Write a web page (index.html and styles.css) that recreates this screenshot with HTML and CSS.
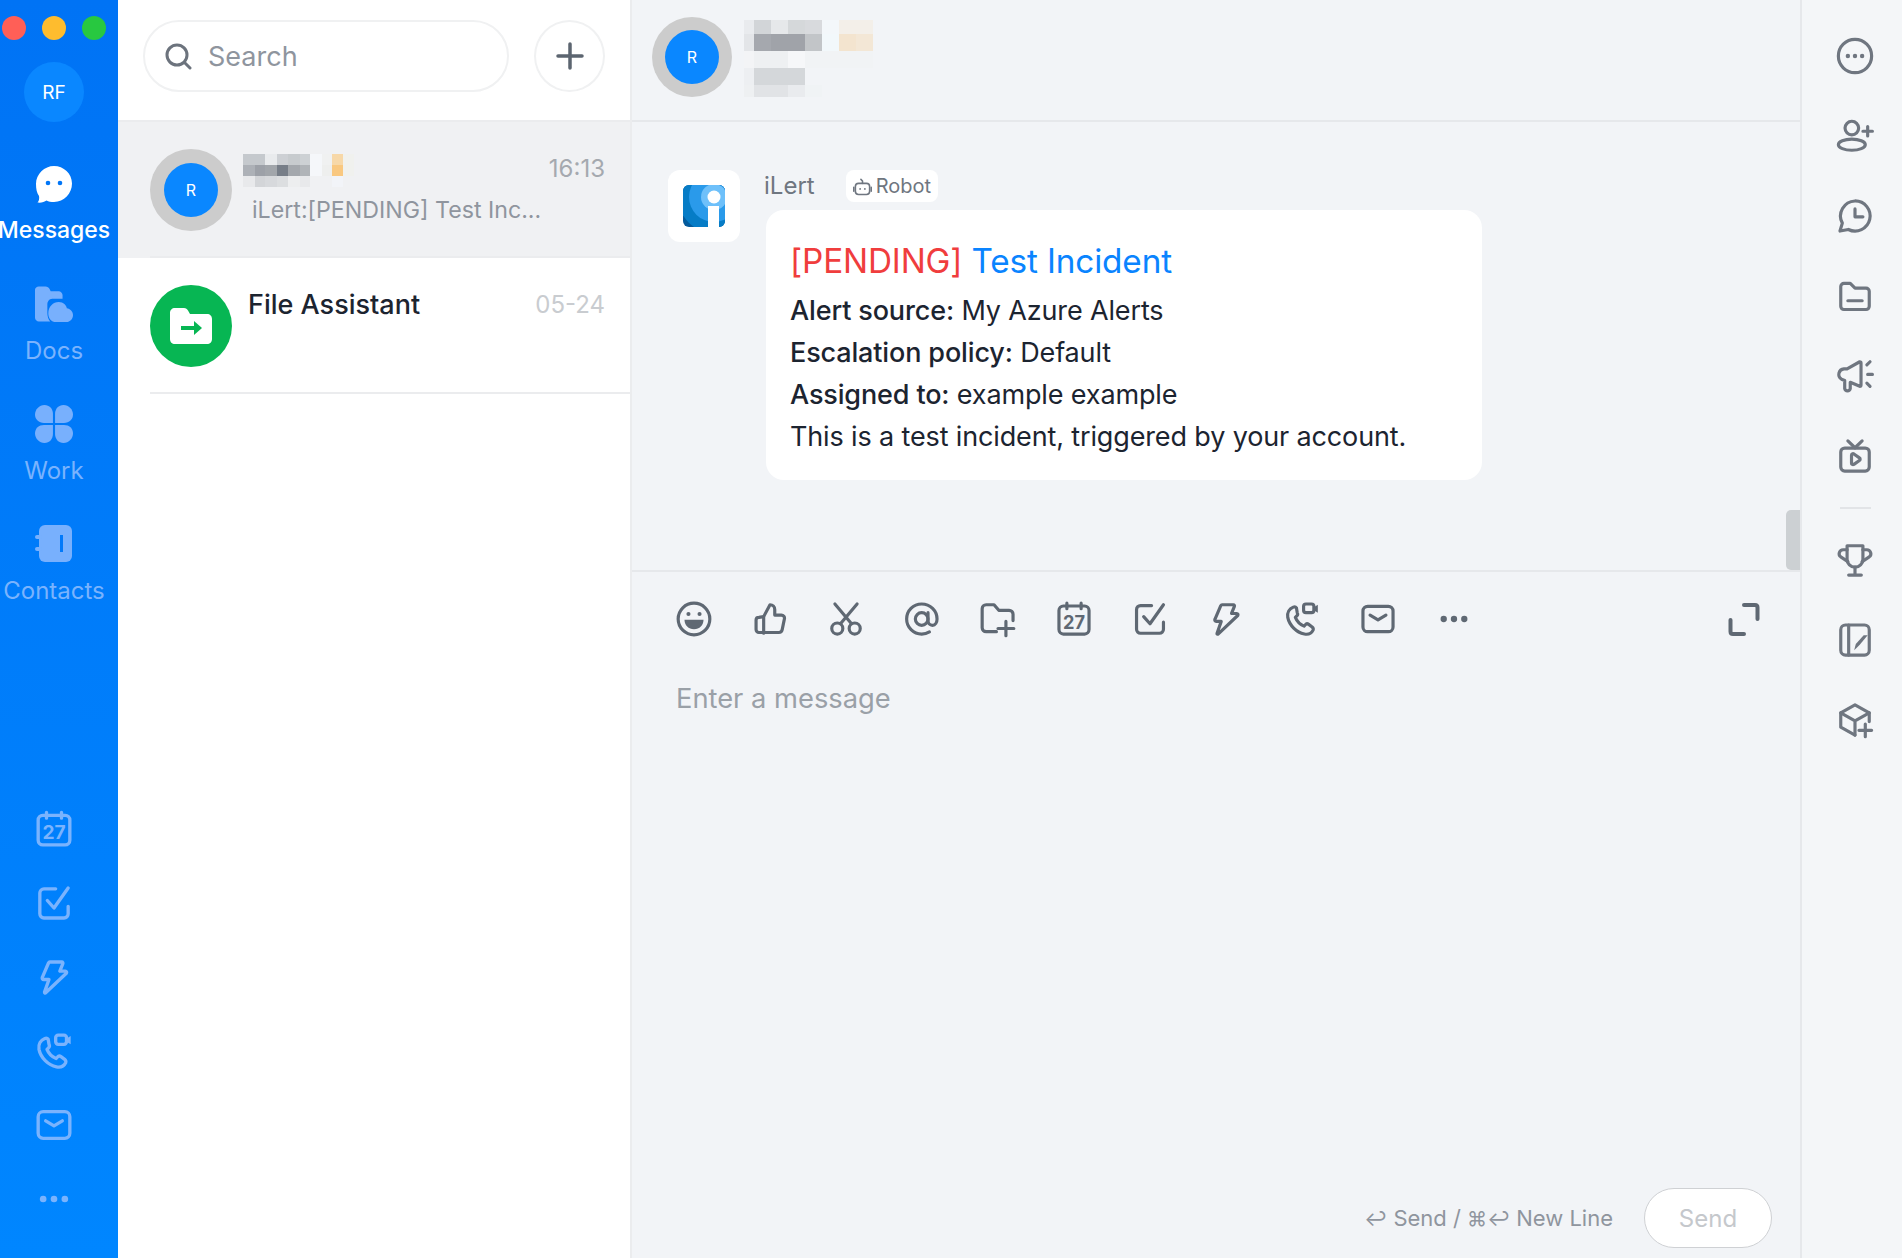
FILE: index.html
```html
<!DOCTYPE html>
<html lang="en">
<head>
  <meta charset="UTF-8">
  <title>Messages</title>
  <link rel="stylesheet" href="styles.css">
</head>
<body>
  <!-- shared icons -->
  <svg class="defs" aria-hidden="true">
    <symbol id="i-cal" viewBox="0 0 24 24">
      <rect x="2.5" y="3.8" width="19" height="17.7" rx="2.8"/>
      <path d="M7.5 2v3.5M16.5 2v3.500"/>
      <text x="12" y="18" class="cal-num">27</text>
    </symbol>
    <symbol id="i-check" viewBox="0 0 24 24">
      <path d="M20.500 14v4.500a2.500 2.500 0 0 1-2.500 2.500H6a2.500 2.500 0 0 1-2.500-2.500V6A2.500 2.500 0 0 1 6 3.500h7"/>
      <path d="M8 10.500l4 4.500 8.500-12"/>
    </symbol>
    <symbol id="i-bolt" viewBox="0 0 24 24">
      <path d="M9.500 3h7.200c.5 0 .8.500.6 1L15.500 8.500h3.300c.7 0 1 .7.600 1.300L7 21.500c-.3.300-.8 0-.7-.4L9 13.500H5.800c-.7 0-1.100-.7-.8-1.300L8.700 3.600c.2-.4.500-.6.800-.6z"/>
    </symbol>
    <symbol id="i-phone" viewBox="0 0 24 24">
      <path d="M6.500 4.500C4 5.500 2.500 8 3 11c1 5 5.500 9.500 10.500 10.500 2.500.5 4.500-.5 5.500-2.500.3-.8 0-1.500-.6-2l-2.200-1.600c-.7-.5-1.600-.4-2.100.2l-.8.9c-2.500-1-4.500-3-5.500-5.500l.9-.9c.6-.6.700-1.400.3-2.100L8.500 5c-.5-.7-1.200-.8-2-.5z"/>
      <rect x="13" y="2.500" width="6.500" height="5.500" rx="1.500"/>
      <path d="M22 3v5l-2.500-1.500v-2z" class="solid"/>
    </symbol>
    <symbol id="i-mail" viewBox="0 0 24 24">
      <rect x="2.500" y="4" width="19" height="16" rx="3"/>
      <path d="M7 9.500l5 3 5-3"/>
    </symbol>
    <symbol id="i-dots" viewBox="0 0 24 24">
      <circle cx="5.500" cy="12" r="2" class="solid"/>
      <circle cx="12" cy="12" r="2" class="solid"/>
      <circle cx="18.500" cy="12" r="2" class="solid"/>
    </symbol>
  </svg>

  <div class="app">
    <!-- left rail -->
    <nav class="rail">
      <div class="lights">
        <span class="dot red"></span>
        <span class="dot amber"></span>
        <span class="dot green"></span>
      </div>
      <div class="me">RF</div>

      <a class="nav-item active">
        <svg class="nav-icon" viewBox="0 0 38 38">
          <path d="M19 1c9.500 0 18 7.500 18 17.500S29 37 19 37c-3 0-5.500-.5-7.500-1.500C9.500 37 6 38 2.500 37.500 4 36 4.500 33.500 4 31 1.800 28 1 24 1 19 1 9 9.500 1 19 1z" fill="#fff"/>
          <circle cx="13" cy="18" r="2.300" fill="#0176f7"/>
          <circle cx="25" cy="18" r="2.300" fill="#0176f7"/>
        </svg>
        <span>Messages</span>
      </a>
      <a class="nav-item">
        <svg class="nav-icon" viewBox="0 0 40 38">
          <path d="M0 4c0-2 2-3.500 4-3.500h7c2 0 3.500 1 4.500 3l1 2H25c2 0 4 2 4 4v4H18c-3 0-5 3-5 6v9c0 3 1 7 3 9H4c-2 0-4-2-4-4z" fill="#78b0fd"/>
          <path d="M25 17c5 0 8 3.500 8.500 6.500 3.500.5 6.500 3.500 6.500 7 0 4-3 7.500-7 7.500H22c-4.500 0-8-3.500-8-9 0-7 5-12 11-12z" fill="#78b0fd"/>
        </svg>
        <span>Docs</span>
      </a>
      <a class="nav-item">
        <svg class="nav-icon" viewBox="0 0 36 36">
          <path d="M9 0c4.700 0 8 3.600 8 8.500V17H8.500C3.600 17 0 13.700 0 9s4-9 9-9z" fill="#78b0fd"/>
          <path d="M27 0c-4.700 0-8 3.600-8 8.500V17h8.500c4.900 0 8.500-3.300 8.500-8s-4-9-9-9z" fill="#78b0fd"/>
          <path d="M9 36c4.700 0 8-3.600 8-8.500V19H8.500C3.600 19 0 22.300 0 27s4 9 9 9z" fill="#78b0fd"/>
          <path d="M27 36c-4.700 0-8-3.600-8-8.500V19h8.500c4.900 0 8.500 3.300 8.500 8s-4 9-9 9z" fill="#78b0fd"/>
        </svg>
        <span>Work</span>
      </a>
      <a class="nav-item">
        <svg class="nav-icon" viewBox="0 0 38 38">
          <rect x="4" y="0" width="33" height="37" rx="6" fill="#78b0fd"/>
          <rect x="0" y="10" width="7" height="4" rx="2" fill="#78b0fd"/>
          <rect x="0" y="22" width="7" height="4" rx="2" fill="#78b0fd"/>
          <rect x="25" y="10" width="3" height="17" fill="#0179fa"/>
        </svg>
        <span>Contacts</span>
      </a>

      <div class="rail-tools">
        <svg class="rail-tool"><use href="#i-cal"/></svg>
        <svg class="rail-tool"><use href="#i-check"/></svg>
        <svg class="rail-tool"><use href="#i-bolt"/></svg>
        <svg class="rail-tool"><use href="#i-phone"/></svg>
        <svg class="rail-tool"><use href="#i-mail"/></svg>
        <svg class="rail-tool"><use href="#i-dots"/></svg>
      </div>
    </nav>

    <!-- conversation list -->
    <section class="list">
      <div class="list-top">
        <div class="search">
          <svg class="search-icon" viewBox="0 0 28 28">
            <circle cx="13" cy="13" r="10"/>
            <path d="M20.500 20.500L26 26"/>
          </svg>
          <span>Search</span>
        </div>
        <div class="add-btn">
          <svg viewBox="0 0 28 28"><path d="M14 2v24M2 14h24"/></svg>
        </div>
      </div>

      <div class="row selected">
        <div class="row-body">
          <div class="avatar-ring"><div class="avatar-inner">R</div></div>
          <div class="row-text">
            <div class="row-head">
              <svg class="mosaic" width="132" height="33" shape-rendering="crispEdges">
                <rect x="0" y="0" width="12" height="11" fill="#c5c9cd"/><rect x="12" y="0" width="10" height="11" fill="#c5c9cd"/><rect x="22" y="0" width="12" height="11" fill="#e9ebed"/><rect x="34" y="0" width="11" height="11" fill="#cdd0d4"/><rect x="45" y="0" width="12" height="11" fill="#c7cbce"/><rect x="57" y="0" width="10" height="11" fill="#cdd1d4"/><rect x="67" y="0" width="12" height="11" fill="#f5f7fa"/><rect x="79" y="0" width="10" height="11" fill="#f0f1f1"/><rect x="89" y="0" width="11" height="11" fill="#f7d8a8"/><rect x="100" y="0" width="11" height="11" fill="#f0f1ee"/>
                <rect x="0" y="11" width="12" height="11" fill="#adb1b7"/><rect x="12" y="11" width="10" height="11" fill="#9da1a8"/><rect x="22" y="11" width="12" height="11" fill="#a2a6ab"/><rect x="34" y="11" width="11" height="11" fill="#777e88"/><rect x="45" y="11" width="12" height="11" fill="#a4a8ad"/><rect x="57" y="11" width="10" height="11" fill="#b0b4b8"/><rect x="67" y="11" width="12" height="11" fill="#f5f7fa"/><rect x="79" y="11" width="10" height="11" fill="#eeefee"/><rect x="89" y="11" width="11" height="11" fill="#f9c880"/><rect x="100" y="11" width="11" height="11" fill="#f0f1ee"/>
                <rect x="0" y="22" width="12" height="11" fill="#e8e9eb"/><rect x="12" y="22" width="10" height="11" fill="#d3d5d8"/><rect x="22" y="22" width="12" height="11" fill="#d7d9dc"/><rect x="34" y="22" width="11" height="11" fill="#dcdee0"/><rect x="45" y="22" width="12" height="11" fill="#edeeef"/><rect x="57" y="22" width="10" height="11" fill="#e8e9eb"/><rect x="89" y="22" width="11" height="11" fill="#f2f4f8"/>
              </svg>
              <span class="row-time">16:13</span>
            </div>
            <div class="row-preview">iLert:[PENDING] Test Inc...</div>
          </div>
        </div>
      </div>

      <div class="row">
        <div class="row-body">
          <div class="avatar-file">
            <svg viewBox="0 0 42 36">
              <path d="M0 5c0-3 2-5 5-5h9c2 0 3 1 4 2.500L20 6h17c3 0 5 2 5 5v20c0 3-2 5-5 5H5c-3 0-5-2-5-5z" fill="#fff"/>
              <path d="M11 20h14" stroke="#07b653" stroke-width="4"/>
              <path d="M24 13l8 7-8 7z" fill="#07b653"/>
            </svg>
          </div>
          <div class="row-text file">
            <div class="row-head">
              <span class="row-name">File Assistant</span>
              <span class="row-time dim">05-24</span>
            </div>
          </div>
        </div>
      </div>
    </section>

    <!-- chat -->
    <main class="chat">
      <header class="chat-head">
        <div class="avatar-ring big"><div class="avatar-inner">R</div></div>
        <svg class="mosaic" width="130" height="77" shape-rendering="crispEdges">
          <rect x="0" y="0" width="10" height="14" fill="#e9ebee"/><rect x="10" y="0" width="17" height="14" fill="#d2d5d8"/><rect x="27" y="0" width="17" height="14" fill="#e6e8ea"/><rect x="44" y="0" width="17" height="14" fill="#d5d8da"/><rect x="61" y="0" width="17" height="14" fill="#d8dadd"/><rect x="78" y="0" width="17" height="14" fill="#f3f7fa"/><rect x="95" y="0" width="34" height="14" fill="#f3efe9"/>
          <rect x="0" y="14" width="10" height="17" fill="#e3e5e8"/><rect x="10" y="14" width="17" height="17" fill="#a5a8ae"/><rect x="27" y="14" width="34" height="17" fill="#a0a3a9"/><rect x="61" y="14" width="17" height="17" fill="#c2c5c8"/><rect x="78" y="14" width="17" height="17" fill="#f2f8fb"/><rect x="95" y="14" width="17" height="17" fill="#f3e4cf"/><rect x="112" y="14" width="17" height="17" fill="#f3e7d6"/>
          <rect x="0" y="31" width="10" height="17" fill="#f3f4f6"/><rect x="10" y="31" width="34" height="17" fill="#eef0f2"/><rect x="44" y="31" width="17" height="17" fill="#f6f7f9"/><rect x="61" y="31" width="68" height="17" fill="#f1f3f5"/>
          <rect x="0" y="48" width="10" height="17" fill="#edeff2"/><rect x="10" y="48" width="51" height="17" fill="#d4d7da"/>
          <rect x="0" y="65" width="10" height="12" fill="#eef0f2"/><rect x="10" y="65" width="34" height="12" fill="#e1e3e6"/><rect x="44" y="65" width="17" height="12" fill="#e9ebee"/><rect x="61" y="65" width="17" height="12" fill="#f0f3f5"/>
        </svg>
      </header>

      <div class="messages">
        <div class="msg">
          <div class="msg-logo">
            <svg viewBox="0 0 42 42">
              <defs><clipPath id="logoClip"><rect width="42" height="42" rx="6"/></clipPath></defs>
              <g clip-path="url(#logoClip)">
                <rect width="42" height="42" fill="#045a9c"/>
                <circle cx="31" cy="12" r="36" fill="#067cc6"/>
                <circle cx="31" cy="12" r="25" fill="#2a9aea"/>
                <circle cx="31" cy="12" r="13" fill="#6ec0fa"/>
                <circle cx="31" cy="12" r="6.500" fill="#fff"/>
                <rect x="25" y="21" width="11" height="21" fill="#fff"/>
              </g>
            </svg>
          </div>
          <div class="msg-main">
            <div class="msg-meta">
              <span class="msg-name">iLert</span>
              <span class="tag">
                <svg viewBox="0 0 24 24">
                  <rect x="3" y="8" width="18" height="14" rx="4"/>
                  <path d="M12 8V5l-2-2M1 13v5M23 13v5"/>
                  <circle cx="9" cy="15" r="1.200" class="solid"/>
                  <circle cx="15" cy="15" r="1.200" class="solid"/>
                </svg>
                Robot
              </span>
            </div>
            <div class="bubble">
              <div class="bubble-title"><span class="pending">[PENDING]</span> <span class="incident">Test Incident</span></div>
              <p><b>Alert source:</b> My Azure Alerts</p>
              <p><b>Escalation policy:</b> Default</p>
              <p><b>Assigned to:</b> example example</p>
              <p>This is a test incident, triggered by your account.</p>
            </div>
          </div>
        </div>
        <div class="scroll-thumb"></div>
      </div>

      <div class="editor">
        <div class="toolbar">
          <svg class="tool" viewBox="0 0 24 24">
            <circle cx="12" cy="12" r="10"/>
            <circle cx="8.500" cy="8.800" r="1.300" class="solid"/>
            <circle cx="15.500" cy="8.800" r="1.300" class="solid"/>
            <path d="M6 12.500h12c0 3.500-2.500 6-6 6s-6-2.500-6-6z" class="solid"/>
          </svg>
          <svg class="tool" viewBox="0 0 24 24">
            <path d="M8 10.500L12 3c1.800 0 3 1.200 3 3v3.500h4.200c1.300 0 2.200 1.200 1.900 2.400l-1.400 6.800c-.2 1-1 1.800-2.100 1.800H5c-1 0-1.800-.8-1.800-1.800v-6c0-1 .8-1.700 1.800-1.700z"/>
            <path d="M8 10.500V21"/>
          </svg>
          <svg class="tool" viewBox="0 0 24 24">
            <circle cx="6.500" cy="18" r="3.500"/>
            <circle cx="17.500" cy="18" r="3.500"/>
            <path d="M5 2.500L15.500 15M19 2.500L8.500 15"/>
          </svg>
          <svg class="tool" viewBox="0 0 24 24">
            <circle cx="11.800" cy="12" r="4"/>
            <path d="M15.800 8v5c0 1.800 1.200 3 2.800 3 1.800 0 2.900-1.800 2.900-4 0-5.300-4.300-9.500-9.700-9.500S2.300 6.700 2.300 12s4.300 9.500 9.500 9.500c1.800 0 3.500-.5 4.900-1.300"/>
          </svg>
          <svg class="tool" viewBox="0 0 24 24">
            <path d="M11 20H4.500A2.500 2.500 0 0 1 2 17.500V5.500A2.500 2.500 0 0 1 4.500 3h5l3 3.500h6.500a2.500 2.500 0 0 1 2.500 2.500v4"/>
            <path d="M17 13.500V22.500M12 18h10"/>
          </svg>
          <svg class="tool"><use href="#i-cal"/></svg>
          <svg class="tool"><use href="#i-check"/></svg>
          <svg class="tool"><use href="#i-bolt"/></svg>
          <svg class="tool"><use href="#i-phone"/></svg>
          <svg class="tool"><use href="#i-mail"/></svg>
          <svg class="tool"><use href="#i-dots"/></svg>
          <svg class="tool expand" viewBox="0 0 32 33">
            <path d="M16 2h11c1.500 0 2.500 1 2.500 2.500V16M2.500 17v11.500c0 1.500 1 2.500 2.500 2.500h11"/>
          </svg>
        </div>
        <div class="placeholder">Enter a message</div>
        <div class="send-row">
          <span class="hint"><span class="key">↩</span> Send / <span class="key">⌘↩</span> New Line</span>
          <button class="send-btn" type="button">Send</button>
        </div>
      </div>
    </main>

    <!-- right rail -->
    <aside class="side">
      <svg class="side-icon" viewBox="0 0 24 24">
        <circle cx="12" cy="12" r="10.500"/>
        <circle cx="7.500" cy="12" r="1.400" class="solid"/>
        <circle cx="12" cy="12" r="1.400" class="solid"/>
        <circle cx="16.500" cy="12" r="1.400" class="solid"/>
      </svg>
      <svg class="side-icon" viewBox="0 0 24 24">
        <circle cx="10" cy="7" r="4.300"/>
        <ellipse cx="10" cy="17.500" rx="8.500" ry="3.500"/>
        <path d="M20 6v6M17 9h6"/>
      </svg>
      <svg class="side-icon" viewBox="0 0 24 24">
        <path d="M12 2.500a9.500 9.500 0 1 1-4.200 18L2.500 21.500 4 16.500A9.500 9.500 0 0 1 12 2.500z"/>
        <path d="M12 7.500v5h5"/>
      </svg>
      <svg class="side-icon" viewBox="0 0 24 24">
        <path d="M3 6a2 2 0 0 1 2-2h4l3 3h7a2 2 0 0 1 2 2v9.500a2 2 0 0 1-2 2H5a2 2 0 0 1-2-2z"/>
        <path d="M7.500 15h9"/>
      </svg>
      <svg class="side-icon" viewBox="0 0 24 24">
        <path d="M15 3L7 7.500H5a3.500 3.500 0 0 0-1.500 6.500l2 .8v5.200a1.800 1.800 0 0 0 3.500 0v-4l6 2.500c.5 0 .8-.3.800-.8V3.800c0-.5-.3-.8-.8-.8z"/>
        <path d="M19.500 5l2-2M20 11h3M19.500 16.500l2 2"/>
      </svg>
      <svg class="side-icon" viewBox="0 0 24 24">
        <rect x="3" y="7" width="18" height="14.500" rx="2.500"/>
        <path d="M7.500 2.500L12 6.800l4.500-4.300"/>
        <path d="M9.800 11.500c0-.8.800-1.200 1.500-.8l3.500 2.500c.6.400.6 1.200 0 1.600l-3.500 2.500c-.7.400-1.500 0-1.500-.8z"/>
      </svg>
      <div class="side-sep"></div>
      <svg class="side-icon" viewBox="0 0 24 24">
        <path d="M7 3h10v8.500a5 5 0 0 1-10 0z"/>
        <path d="M7 5.500H4.500A2.500 2.500 0 0 0 3 10l4.500 3M17 5.500h2.500A2.500 2.500 0 0 1 21 10l-4.500 3"/>
        <path d="M12 16.500V21.500M8 21.500h8"/>
      </svg>
      <svg class="side-icon" viewBox="0 0 24 24">
        <rect x="3" y="2.500" width="18" height="19" rx="3"/>
        <path d="M8 2.500v19"/>
        <path d="M20 9l-5 6-3.500 3.500 1-4 5-5.500z" class="solid"/>
      </svg>
      <svg class="side-icon" viewBox="0 0 24 24">
        <path d="M21 13V7.500L12 2.500 3 7.500v9L12 21.500"/>
        <path d="M3 7.500l9 5 9-5M12 12.500v9"/>
        <path d="M18.500 14.500v8M14.500 18.500h8"/>
      </svg>
    </aside>
  </div>
</body>
</html>
```

FILE: styles.css
```css
* {
  box-sizing: border-box;
}
html, body {
  height: 100%;
}
body {
  margin: 0;
  font-family: Inter, "DejaVu Sans", sans-serif;
  background: #fff;
  color: #1c2430;
  overflow: hidden;
}
p {
  margin: 0;
}
.defs {
  display: none;
}
.solid {
  fill: currentColor;
  stroke: none;
}
.cal-num {
  font-family: Inter, sans-serif;
  font-size: 11.5px;
  font-weight: 700;
  text-anchor: middle;
  fill: currentColor;
  stroke: none;
}
.app {
  display: flex;
  height: 100vh;
}

/* left rail */
.rail {
  width: 118px;
  flex-shrink: 0;
  display: flex;
  flex-direction: column;
  align-items: center;
  padding-right: 10px;
  background: linear-gradient(180deg, #0073f5 0%, #0086ff 100%);
  color: #fff;
}
.lights {
  display: flex;
  gap: 16px;
  padding-top: 16px;
}
.dot {
  width: 24px;
  height: 24px;
  border-radius: 50%;
}
.red { background: #ff5f57; }
.amber { background: #febc2e; }
.green { background: #28c840; }
.me {
  width: 60px;
  height: 60px;
  margin-top: 22px;
  margin-bottom: 22px;
  border-radius: 50%;
  background: #0a87ff;
  display: flex;
  align-items: center;
  justify-content: center;
  font-size: 19px;
}
.nav-item {
  height: 120px;
  padding-top: 21px;
  display: flex;
  flex-direction: column;
  align-items: center;
  color: #7ab3fd;
  font-size: 24px;
  white-space: nowrap;
}
.nav-item.active {
  color: #fff;
  font-size: 23px;
  font-weight: 500;
}
.nav-icon {
  width: 38px;
  height: 38px;
  margin-bottom: 13px;
}
.rail-tools {
  margin-top: auto;
  padding-bottom: 22px;
  display: flex;
  flex-direction: column;
  align-items: center;
}
.rail-tool {
  width: 40px;
  height: 40px;
  margin: 17px 0;
  fill: none;
  stroke: #7ab3fd;
  color: #7ab3fd;
  stroke-width: 2;
  stroke-linecap: round;
  stroke-linejoin: round;
}

/* list */
.list {
  width: 514px;
  flex-shrink: 0;
  border-right: 2px solid #ebecee;
  background: #fff;
}
.list-top {
  height: 122px;
  padding: 20px 25px 0;
  display: flex;
  justify-content: space-between;
  border-bottom: 2px solid #ebecee;
}
.search {
  width: 366px;
  height: 72px;
  border: 2px solid #f0f1f2;
  border-radius: 36px;
  padding-left: 19px;
  display: flex;
  align-items: center;
  gap: 16px;
  font-size: 27px;
  color: #8f959e;
}
.search-icon {
  width: 28px;
  height: 28px;
  fill: none;
  stroke: #6c737d;
  stroke-width: 3;
  stroke-linecap: round;
}
.add-btn {
  width: 71px;
  height: 72px;
  border: 2px solid #f0f1f2;
  border-radius: 50%;
  display: flex;
  align-items: center;
  justify-content: center;
}
.add-btn svg {
  width: 28px;
  height: 28px;
  fill: none;
  stroke: #5c6570;
  stroke-width: 3.500;
  stroke-linecap: round;
}
.row {
  height: 136px;
  padding-left: 32px;
}
.row.selected {
  background: #f0f1f3;
}
.row-body {
  height: 100%;
  display: flex;
  gap: 11px;
  padding: 27px 25px 0 0;
  border-bottom: 2px solid #ebecee;
}
.avatar-ring {
  width: 82px;
  height: 82px;
  flex-shrink: 0;
  border-radius: 50%;
  background: #ccc;
  display: flex;
  align-items: center;
  justify-content: center;
}
.avatar-inner {
  width: 54px;
  height: 54px;
  border-radius: 50%;
  background: #0a87ff;
  color: #fff;
  font-size: 16px;
  display: flex;
  align-items: center;
  justify-content: center;
}
.avatar-file {
  width: 82px;
  height: 82px;
  flex-shrink: 0;
  border-radius: 50%;
  background: #07b653;
  display: flex;
  align-items: center;
  justify-content: center;
}
.avatar-file svg {
  width: 42px;
  height: 36px;
}
.row-text {
  flex: 1;
  min-width: 0;
}
.row-text.file {
  padding: 1px 0 0 5px;
}
.row-head {
  display: flex;
  justify-content: space-between;
  align-items: flex-start;
}
.selected .row-head {
  padding-top: 5px;
}
.selected .row-time {
  margin-top: -2px;
}
.mosaic {
  display: block;
  flex-shrink: 0;
}
.row-time {
  font-size: 24px;
  line-height: 34px;
  white-space: nowrap;
  color: #a5a9af;
}
.row-time.dim {
  margin-top: 2px;
  color: #c9ccd0;
}
.row-name {
  font-size: 27px;
  line-height: 38px;
  font-weight: 500;
}
.row-preview {
  margin-top: 6px;
  padding-left: 9px;
  font-size: 23.2px;
  line-height: 34px;
  color: #8f959e;
}

/* chat */
.chat {
  flex: 1;
  min-width: 0;
  display: flex;
  flex-direction: column;
  background: #f2f4f7;
}
.chat-head {
  height: 122px;
  flex-shrink: 0;
  padding: 17px 0 0 20px;
  display: flex;
  gap: 12px;
  border-bottom: 2px solid #e6e8eb;
}
.avatar-ring.big {
  width: 80px;
  height: 80px;
}
.chat-head .mosaic {
  margin-top: 3px;
}
.messages {
  height: 450px;
  flex-shrink: 0;
  position: relative;
  padding: 48px 0 0 36px;
  border-bottom: 2px solid #e6e8eb;
}
.msg {
  display: flex;
  gap: 26px;
}
.msg-logo {
  width: 72px;
  height: 72px;
  flex-shrink: 0;
  background: #fff;
  border-radius: 12px;
  display: flex;
  align-items: center;
  justify-content: center;
}
.msg-logo svg {
  width: 42px;
  height: 42px;
}
.msg-meta {
  height: 40px;
  margin-left: -2px;
  display: flex;
  align-items: flex-start;
  gap: 31px;
}
.msg-name {
  font-size: 24px;
  line-height: 32px;
  color: #6f7680;
}
.tag {
  height: 32px;
  padding: 0 7px;
  background: #fff;
  border-radius: 8px;
  display: flex;
  align-items: center;
  gap: 4px;
  font-size: 20px;
  color: #6f7680;
}
.tag svg {
  width: 19px;
  height: 19px;
  fill: none;
  stroke: #6f7680;
  stroke-width: 2;
  stroke-linecap: round;
  stroke-linejoin: round;
}
.bubble {
  width: 716px;
  height: 270px;
  padding: 27px 24px 0;
  background: #fff;
  border-radius: 18px;
  font-size: 27px;
  line-height: 42px;
  letter-spacing: -0.14px;
}
.bubble b {
  font-weight: 500;
}
.bubble-title {
  font-size: 33.3px;
  line-height: 48px;
  margin-bottom: 5px;
}
.pending {
  color: #f03d3d;
}
.incident {
  color: #0a84ff;
}
.scroll-thumb {
  position: absolute;
  right: 0;
  bottom: 0;
  width: 14px;
  height: 60px;
  background: #ccd0d3;
  border-radius: 5px 0 0 5px;
}
.editor {
  flex: 1;
  display: flex;
  flex-direction: column;
  padding: 28px 28px 10px 43px;
}
.toolbar {
  display: flex;
  align-items: center;
  gap: 38px;
}
.tool {
  width: 38px;
  height: 38px;
  flex-shrink: 0;
  fill: none;
  stroke: #5f6873;
  color: #5f6873;
  stroke-width: 2;
  stroke-linecap: round;
  stroke-linejoin: round;
}
.tool.expand {
  width: 32px;
  height: 33px;
  margin-left: auto;
  margin-right: 12px;
  stroke-width: 4;
}
.placeholder {
  margin-top: 43px;
  padding-left: 1px;
  font-size: 27.3px;
  line-height: 36px;
  color: #9aa0a7;
}
.send-row {
  margin-top: auto;
  display: flex;
  justify-content: flex-end;
  align-items: center;
  gap: 31px;
}
.hint {
  font-size: 22px;
  color: #8f959e;
}
.key {
  font-size: 20px;
}
.send-btn {
  width: 128px;
  height: 60px;
  background: #fff;
  border: 1.500px solid #cfd1d4;
  border-radius: 30px;
  font-family: inherit;
  font-size: 24px;
  color: #c5c8cc;
}

/* right rail */
.side {
  width: 102px;
  flex-shrink: 0;
  background: #f4f6f8;
  border-left: 2px solid #e6e8eb;
  padding: 37px 0 0 6px;
  display: flex;
  flex-direction: column;
  align-items: center;
  gap: 42px;
}
.side-icon {
  width: 38px;
  height: 38px;
  flex-shrink: 0;
  fill: none;
  stroke: #6f7680;
  color: #6f7680;
  stroke-width: 2;
  stroke-linecap: round;
  stroke-linejoin: round;
}
.side-sep {
  width: 31px;
  height: 2px;
  margin: -10px 0 -10px;
  flex-shrink: 0;
  background: #e2e4e7;
}
```
